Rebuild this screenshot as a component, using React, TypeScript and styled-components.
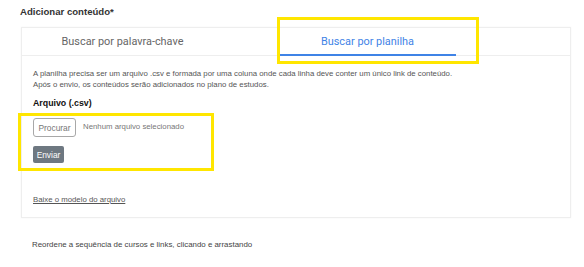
import styled, { createGlobalStyle } from "styled-components";

const GlobalStyle = createGlobalStyle`
  body {
    margin: 0;
    background: #ffffff;
    font-family: "Liberation Sans", Arial, sans-serif;
    color: #555;
  }
`;

const Page = styled.div`
  width: 584px;
  height: 267px;
  padding: 6px 13px 0 20px;
  box-sizing: border-box;
`;

const Title = styled.h3`
  margin: 0;
  font-size: 9.6px;
  line-height: 12px;
  font-weight: 700;
  color: #333;
`;

const Card = styled.div`
  margin-top: 9px;
  margin-left: 1px;
  border: 1px solid #eee;
  box-shadow: 0 0 2px rgba(0, 0, 0, 0.04);
`;

const TabList = styled.div`
  display: flex;
  gap: 68px;
  padding-left: 12px;
  border-bottom: 1px solid #eee;
`;

const Tab = styled.div<{ $active?: boolean }>`
  position: relative;
  width: 177px;
  height: 28px;
  box-sizing: border-box;
  display: flex;
  align-items: center;
  justify-content: center;
  font-family: Roboto, "Liberation Sans", sans-serif;
  font-size: 10.9px;
  color: ${(p) => (p.$active ? "#3f83e6" : "#666")};
  border-bottom: 2px solid ${(p) => (p.$active ? "#3f83e6" : "transparent")};
  margin-bottom: -1px;
`;

const Highlight = styled.span<{ $t: number; $r: number; $b: number; $l: number }>`
  position: absolute;
  top: ${(p) => p.$t}px;
  right: ${(p) => p.$r}px;
  bottom: ${(p) => p.$b}px;
  left: ${(p) => p.$l}px;
  border: 3px solid #ffe600;
  pointer-events: none;
`;

const Body = styled.div`
  padding: 12px 11px 11px 11px;
`;

const Desc = styled.p`
  margin: 0;
  font-size: 7.8px;
  line-height: 11px;
  color: #555;
`;

const Label = styled.div`
  margin-top: 7px;
  font-size: 8.8px;
  line-height: 12px;
  font-weight: 700;
  color: #111;
`;

const Upload = styled.div`
  position: relative;
  width: 168px;
  margin-top: 9px;
  display: flex;
  flex-direction: column;
  align-items: flex-start;
  gap: 9px;
`;

const FileRow = styled.div`
  display: flex;
  align-items: center;
  gap: 7px;
`;

const BrowseButton = styled.button`
  height: 19px;
  width: 43px;
  padding: 0;
  border: 1px solid #a8a8a8;
  border-radius: 3px;
  background: #fff;
  font-family: "Liberation Sans", Arial, sans-serif;
  font-size: 8.4px;
  color: #777;
`;

const FileName = styled.span`
  font-size: 7.8px;
  color: #777;
  white-space: nowrap;
  margin-top: -2px;
`;

const SendButton = styled.button`
  height: 17px;
  width: 31px;
  padding: 0;
  border: none;
  border-radius: 2px;
  background: #6e7881;
  color: #fff;
  font-family: "Liberation Sans", Arial, sans-serif;
  font-size: 8.4px;
`;

const Link = styled.a`
  display: inline-block;
  margin-top: 31px;
  font-size: 7.8px;
  line-height: 11px;
  color: #555;
  text-decoration: underline;
`;

const Note = styled.p`
  margin: 21px 0 0 12px;
  font-size: 7.9px;
  line-height: 11px;
  color: #444;
`;

export default function App() {
  return (
    <>
      <GlobalStyle />
      <Page>
        <Title>Adicionar conteúdo*</Title>
        <Card>
          <TabList>
            <Tab>Buscar por palavra-chave</Tab>
            <Tab $active>
              Buscar por planilha
              <Highlight $t={-11} $r={-23} $b={-10} $l={-2} />
            </Tab>
          </TabList>
          <Body>
            <Desc>
              A planilha precisa ser um arquivo .csv e formada por uma coluna onde cada linha deve conter um único link de conteúdo.
              <br />
              Após o envio, os conteúdos serão adicionados no plano de estudos.
            </Desc>
            <Label>Arquivo (.csv)</Label>
            <Upload>
              <FileRow>
                <BrowseButton>Procurar</BrowseButton>
                <FileName>Nenhum arquivo selecionado</FileName>
              </FileRow>
              <SendButton>Enviar</SendButton>
              <Highlight $t={-5} $r={-13} $b={-8} $l={-15} />
            </Upload>
            <Link>Baixe o modelo do arquivo</Link>
          </Body>
        </Card>
        <Note>Reordene a sequência de cursos e links, clicando e arrastando</Note>
      </Page>
    </>
  );
}
